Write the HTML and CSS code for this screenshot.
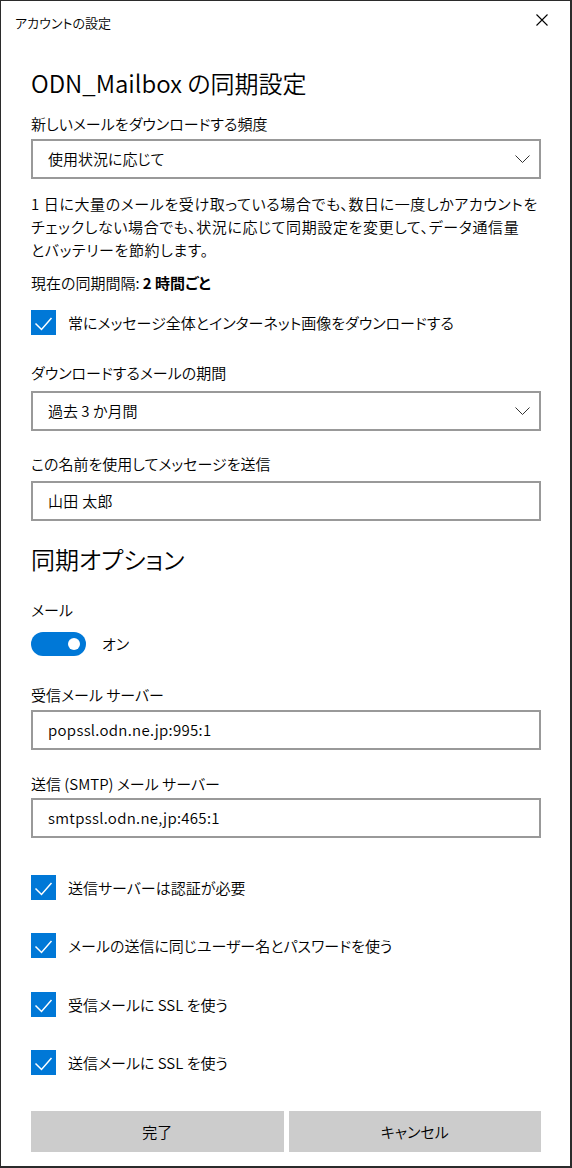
FILE: index.html
```html
<!DOCTYPE html>
<html lang="ja">
<head>
<meta charset="utf-8">
<title>アカウントの設定</title>
<link rel="stylesheet" href="styles.css">
</head>
<body>
<div class="window">
  <div class="titlebar">
    <span class="title">アカウントの設定</span>
    <svg class="close" width="12" height="12" viewBox="0 0 12 12"><path d="M0.5 0.5 L11.5 11.5 M11.5 0.5 L0.5 11.5" stroke="#000" stroke-width="1.1" fill="none"/></svg>
  </div>
  <div class="content">
    <h1 class="heading h-main">ODN_Mailbox の同期設定</h1>
    <div class="label l-freq">新しいメールをダウンロードする頻度</div>
    <div class="select s-freq">
      <span>使用状況に応じて</span>
      <svg class="chev" width="15" height="8" viewBox="0 0 15 8"><path d="M0.5 0.5 L7.5 7.5 L14.5 0.5" stroke="#333" stroke-width="1" fill="none"/></svg>
    </div>
    <p class="desc">1 日に大量のメールを受け取っている場合でも、数日に一度しかアカウントを<br>チェックしない場合でも、状況に応じて同期設定を変更して、データ通信量<br>とバッテリーを節約します。</p>
    <div class="label l-interval">現在の同期間隔: <b>2 時間ごと</b></div>
    <div class="check c-full">
      <span class="box"><svg width="25" height="25" viewBox="0 0 25 25"><path d="M4.5 13.5 L10.5 19.5 L20.5 8" stroke="#fff" stroke-width="1.5" fill="none"/></svg></span>
      <span>常にメッセージ全体とインターネット画像をダウンロードする</span>
    </div>
    <div class="label l-period">ダウンロードするメールの期間</div>
    <div class="select s-period">
      <span>過去 3 か月間</span>
      <svg class="chev" width="15" height="8" viewBox="0 0 15 8"><path d="M0.5 0.5 L7.5 7.5 L14.5 0.5" stroke="#333" stroke-width="1" fill="none"/></svg>
    </div>
    <div class="label l-name">この名前を使用してメッセージを送信</div>
    <div class="input i-name">山田 太郎</div>
    <h2 class="heading h-sync">同期オプション</h2>
    <div class="label l-mail">メール</div>
    <div class="toggle-row">
      <span class="toggle"><span class="knob"></span></span>
      <span>オン</span>
    </div>
    <div class="label l-in">受信メール サーバー</div>
    <div class="input i-in">popssl.odn.ne.jp:995:1</div>
    <div class="label l-out">送信 (SMTP) メール サーバー</div>
    <div class="input i-out">smtpssl.odn.ne,jp:465:1</div>
    <div class="check c1">
      <span class="box"><svg width="25" height="25" viewBox="0 0 25 25"><path d="M4.5 13.5 L10.5 19.5 L20.5 8" stroke="#fff" stroke-width="1.5" fill="none"/></svg></span>
      <span>送信サーバーは認証が必要</span>
    </div>
    <div class="check c2">
      <span class="box"><svg width="25" height="25" viewBox="0 0 25 25"><path d="M4.5 13.5 L10.5 19.5 L20.5 8" stroke="#fff" stroke-width="1.5" fill="none"/></svg></span>
      <span>メールの送信に同じユーザー名とパスワードを使う</span>
    </div>
    <div class="check c3">
      <span class="box"><svg width="25" height="25" viewBox="0 0 25 25"><path d="M4.5 13.5 L10.5 19.5 L20.5 8" stroke="#fff" stroke-width="1.5" fill="none"/></svg></span>
      <span>受信メールに SSL を使う</span>
    </div>
    <div class="check c4">
      <span class="box"><svg width="25" height="25" viewBox="0 0 25 25"><path d="M4.5 13.5 L10.5 19.5 L20.5 8" stroke="#fff" stroke-width="1.5" fill="none"/></svg></span>
      <span>送信メールに SSL を使う</span>
    </div>
    <div class="buttons">
      <div class="btn">完了</div>
      <div class="btn">キャンセル</div>
    </div>
  </div>
</div>
</body>
</html>
```
FILE: styles.css
```css
html, body {
  margin: 0;
  padding: 0;
  background: #fff;
}
body {
  font-family: "Noto Sans CJK JP", sans-serif;
  font-feature-settings: "palt";
  font-size: 15px;
  font-weight: 350;
  color: #000;
}
.window {
  width: 572px;
  height: 1168px;
  box-sizing: border-box;
  border: 1px solid #2b2b2b;
  border-right-width: 2px;
  border-bottom-width: 2px;
  overflow: hidden;
}
.titlebar {
  height: 44px;
  display: flex;
  align-items: center;
  justify-content: space-between;
  padding: 0 22px 0 14px;
}
.title {
  font-size: 13px;
  line-height: 16px;
}
.close {
  display: block;
  margin-bottom: 6px;
}
.content {
  padding: 0 0 0 30px;
  width: 510px;
  display: flex;
  flex-direction: column;
}
.heading {
  margin: 0;
  font-size: 24px;
  font-weight: 350;
  line-height: 32px;
}
.h-main { margin-top: 22px; }
.h-sync { margin-top: 22px; }
.label {
  line-height: 20px;
}
.label b { font-weight: 700; }
.l-freq { margin-top: 15px; }
.l-interval { margin-top: 12px; }
.l-period { margin-top: 28px; }
.l-name { margin-top: 23px; }
.l-mail { margin-top: 25px; }
.l-in { margin-top: 29px; }
.l-out { margin-top: 24px; }
.select, .input {
  height: 40px;
  box-sizing: border-box;
  border: 2px solid #999;
  display: flex;
  align-items: center;
  padding: 0 9px 0 15px;
  line-height: 20px;
}
.input { letter-spacing: 0.3px; }
.select { justify-content: space-between; }
.chev { display: block; }
.s-freq { margin-top: 5px; }
.s-period { margin-top: 8px; }
.i-name { margin-top: 7px; }
.i-in { margin-top: 5px; }
.i-out { margin-top: 4px; }
.desc {
  margin: 13px 0 0 0;
  line-height: 23px;
  white-space: nowrap;
  letter-spacing: 0.6px;
}
.check {
  display: flex;
  align-items: center;
  gap: 12px;
  height: 25px;
  line-height: 20px;
}
.box {
  width: 25px;
  height: 25px;
  background: #0078d7;
  flex: none;
}
.box svg { display: block; }
.c-full { margin-top: 17px; }
.c1 { margin-top: 37px; }
.c2 { margin-top: 33px; }
.c3 { margin-top: 34px; }
.c4 { margin-top: 33px; }
.toggle-row {
  margin-top: 12px;
  display: flex;
  align-items: center;
  gap: 16px;
  height: 24px;
  line-height: 20px;
}
.toggle {
  width: 55px;
  height: 24px;
  border-radius: 12px;
  background: #0078d7;
  display: flex;
  align-items: center;
  justify-content: flex-end;
  padding-right: 6px;
  box-sizing: border-box;
}
.knob {
  width: 12px;
  height: 12px;
  border-radius: 50%;
  background: #fff;
}
.buttons {
  margin-top: 36px;
  display: flex;
  gap: 5px;
}
.btn {
  flex: 1;
  height: 41px;
  background: #ccc;
  display: flex;
  align-items: center;
  justify-content: center;
  line-height: 20px;
}
```
